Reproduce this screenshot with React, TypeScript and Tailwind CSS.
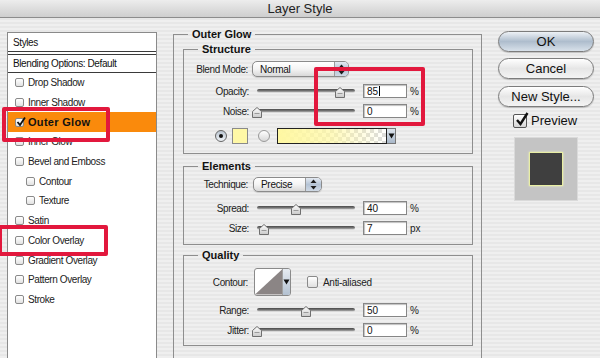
import React from "react";

const styleItems = [
  { name: "Drop Shadow" },
  { name: "Inner Shadow" },
  { name: "Outer Glow", active: true },
  { name: "Inner Glow" },
  { name: "Bevel and Emboss" },
  { name: "Contour", sub: true },
  { name: "Texture", sub: true },
  { name: "Satin" },
  { name: "Color Overlay" },
  { name: "Gradient Overlay" },
  { name: "Pattern Overlay" },
  { name: "Stroke" },
];

function TinyBox({ checked }: { checked?: boolean }) {
  return (
    <div className="relative h-[9px] w-[9px] shrink-0 rounded-[2px] border border-[#8a8a8a] bg-gradient-to-b from-white to-[#e2e2e2]">
      {checked && (
        <svg className="absolute -top-[2px] left-0" width="10" height="10" viewBox="0 0 10 10">
          <path d="M1.5 5 L4 8 L9 0.5" fill="none" stroke="#111" strokeWidth="1.8" />
        </svg>
      )}
    </div>
  );
}

function Arrows() {
  return (
    <svg width="7" height="11" viewBox="0 0 7 11">
      <path d="M3.5 0.5 L6.5 4 H0.5 Z" fill="#1c1c1c" />
      <path d="M3.5 10.5 L6.5 7 H0.5 Z" fill="#1c1c1c" />
    </svg>
  );
}

function DownArrow() {
  return (
    <svg width="7" height="6" viewBox="0 0 7 6">
      <path d="M0.5 0.5 H6.5 L3.5 5.5 Z" fill="#111" />
    </svg>
  );
}

function Popup({ label, w, h, step }: { label: string; w: string; h: string; step: string }) {
  return (
    <div className={`flex ${w} ${h} overflow-hidden rounded-[5px] border border-[#8b8b8b] bg-gradient-to-b from-white via-[#f4f4f4] to-[#d9d9d9] shadow-[0_1px_1px_rgba(0,0,0,0.15)]`}>
      <div className="flex flex-1 items-center pl-[7px] text-[10px] tracking-[-0.3px]">{label}</div>
      <div className={`flex ${step} items-center justify-center border-l border-[#9a9a9a] bg-gradient-to-b from-[#e4eaf2] via-[#b5c4d6] to-[#cfd9e5]`}>
        <Arrows />
      </div>
    </div>
  );
}

function Slider({ value }: { value: number }) {
  return (
    <div className="relative ml-[8px] flex h-[14px] w-[98px] items-center">
      <div className="h-[4px] w-full rounded-full border-b border-[#d8d8d8] bg-gradient-to-b from-[#4a4a4a] via-[#6e6e6e] to-[#a8a8a8]" />
      <svg
        className="absolute top-[3px]"
        style={{ left: `calc(${value}% - 5px)` }}
        width="10"
        height="11"
        viewBox="0 0 10 11"
      >
        <defs>
          <linearGradient id="thumb" x1="0" y1="0" x2="0" y2="1">
            <stop offset="0" stopColor="#ffffff" />
            <stop offset="1" stopColor="#c9c9c9" />
          </linearGradient>
        </defs>
        <path d="M5 0.5 L9.5 4.5 V10.5 H0.5 V4.5 Z" fill="url(#thumb)" stroke="#6f6f6f" />
        <path d="M2.5 6.5 H7.5" stroke="#9a9a9a" />
      </svg>
    </div>
  );
}

function NumField({ value, caret }: { value: string; caret?: boolean }) {
  return (
    <div className="ml-[8px] flex h-[14px] w-[44px] items-center border border-[#868686] bg-white pl-[3px] text-[10px] shadow-[inset_1px_1px_1px_rgba(0,0,0,0.25)]">
      {value}
      {caret && <span className="ml-[1px] h-[10px] w-px bg-black" />}
    </div>
  );
}

function SliderRow({ label, value, unit, caret, mt }: { label: string; value: number; unit: string; caret?: boolean; mt: string }) {
  return (
    <div className={`flex h-[14px] items-center ${mt}`}>
      <div className="w-[65px] text-right text-[10px] tracking-[-0.4px] text-[#222]">{label}</div>
      <Slider value={value} />
      <NumField value={String(value)} caret={caret} />
      <div className="ml-[3px] text-[10px] text-[#222]">{unit}</div>
    </div>
  );
}

function Group({ title, className, legend = "ml-[14px]", children }: { title: string; className: string; legend?: string; children: React.ReactNode }) {
  return (
    <fieldset className={`border border-[#8e8e8e] ${className}`}>
      <legend className={`${legend} px-[4px] text-[11px] leading-[12px] font-bold text-[#111]`}>{title}</legend>
      {children}
    </fieldset>
  );
}

function AquaButton({ label, primary, mt }: { label: string; primary?: boolean; mt: string }) {
  return (
    <button
      className={`${mt} flex h-[21px] w-[96px] items-center justify-center rounded-full border border-[#7c7c7c] text-[13px] text-[#111] shadow-[0_1px_1px_rgba(0,0,0,0.2)] ${
        primary
          ? "bg-gradient-to-b from-[#eef2f6] via-[#aebdcd] to-[#d8e1ea]"
          : "bg-gradient-to-b from-white via-[#e6e6e6] to-[#f4f4f4]"
      }`}
    >
      {label}
    </button>
  );
}

export default function App() {
  return (
    <div className="relative h-[358px] w-[600px] overflow-hidden bg-[repeating-linear-gradient(180deg,#efefef_0px,#efefef_2px,#e7e7e7_2px,#e7e7e7_4px)] font-['Liberation_Sans',Arial,sans-serif] text-[#111]">
      <div className="h-[18px] border-b border-[#8c8c8c] bg-gradient-to-b from-[#ededed] to-[#cecece] text-center text-[13px] leading-[17px] text-[#222]">
        Layer Style
      </div>

      <div className="flex items-start">
        {/* styles list */}
        <div className="ml-[7px] mt-[14px] h-[340px] w-[150px] shrink-0 border border-[#8a8a8a] bg-white">
          <div className="flex h-[19px] items-center border-b border-[#3a3a3a] pl-[5px] text-[10px] tracking-[-0.4px]">Styles</div>
          <div className="h-[2px]" />
          <div className="flex h-[19px] items-center border-y border-[#3a3a3a] pl-[5px] text-[10px] tracking-[-0.4px]">
            Blending Options: Default
          </div>
          {styleItems.map((s) => (
            <div
              key={s.name}
              className={`flex h-[19.7px] items-center ${s.sub ? "pl-[18px]" : "pl-[7px]"} ${s.active ? "bg-[#fa8a0c]" : ""}`}
            >
              <TinyBox checked={s.active} />
              {s.active ? (
                <span className="ml-[4px] text-[11px] font-bold tracking-[0.3px]">{s.name}</span>
              ) : (
                <span className="ml-[4px] text-[10px] tracking-[-0.4px] text-[#222]">{s.name}</span>
              )}
            </div>
          ))}
        </div>

        {/* settings */}
        <Group title="Outer Glow" legend="ml-[5px]" className="ml-[16px] mt-[10px] h-[340px] w-[309px] shrink-0 pl-[9px] pr-[8px]">
          <Group title="Structure" className="mt-[3px] w-[290px] pb-[9px]">
            <div className="mt-[6px] flex h-[16px] items-center">
              <div className="w-[64px] text-right text-[10px] tracking-[-0.4px] text-[#222]">Blend Mode:</div>
              <div className="ml-[4px]">
                <Popup label="Normal" w="w-[97px]" h="h-[16px]" step="w-[14px]" />
              </div>
            </div>
            <SliderRow label="Opacity:" value={85} unit="%" caret mt="mt-[7px]" />
            <SliderRow label="Noise:" value={0} unit="%" mt="mt-[6px]" />
            <div className="mt-[10px] flex h-[16px] items-center pl-[31px]">
              <div className="flex h-[12px] w-[12px] items-center justify-center rounded-full border border-[#666] bg-gradient-to-b from-[#b9c4d0] to-[#eef2f6]">
                <div className="h-[4px] w-[4px] rounded-full bg-[#111]" />
              </div>
              <div className="ml-[5px] h-[16px] w-[16px] border border-[#8a8a8a] bg-[#fff8a6]" />
              <div className="ml-[10px] h-[12px] w-[12px] rounded-full border border-[#999] bg-gradient-to-b from-white to-[#d8d8d8]" />
              <div className="ml-[7px] flex h-[16px]">
                <div className="h-[16px] w-[110px] border border-[#222] bg-[repeating-conic-gradient(#dcdcdc_0_25%,#ffffff_0_50%)] bg-[length:8px_8px]">
                  <div className="h-full w-full bg-gradient-to-r from-[#fff8a2] via-[#fff8a2]/70 to-transparent" />
                </div>
                <div className="flex h-[16px] w-[9px] items-center justify-center border-y border-r border-[#777] bg-gradient-to-b from-[#dde4ec] to-[#a9b8c9]">
                  <DownArrow />
                </div>
              </div>
            </div>
          </Group>

          <Group title="Elements" className="mt-[6px] w-[290px] pb-[9px]">
            <div className="mt-[5px] flex h-[15px] items-center">
              <div className="w-[64px] text-right text-[10px] tracking-[-0.4px] text-[#222]">Technique:</div>
              <div className="ml-[5px]">
                <Popup label="Precise" w="w-[69px]" h="h-[15px]" step="w-[16px]" />
              </div>
            </div>
            <SliderRow label="Spread:" value={40} unit="%" mt="mt-[9px]" />
            <SliderRow label="Size:" value={7} unit="px" mt="mt-[6px]" />
          </Group>

          <Group title="Quality" className="mt-[4px] w-[290px] pb-[8px]">
            <div className="mt-[7px] flex h-[28px] items-center">
              <div className="w-[64px] text-right text-[10px] tracking-[-0.4px] text-[#222]">Contour:</div>
              <div className="ml-[6px] flex h-[28px] w-[37px] overflow-hidden rounded-[3px] border border-[#8a8a8a] bg-white">
                <svg width="28" height="26" viewBox="0 0 28 26">
                  <path d="M0 26 L28 0 V26 Z" fill="#8b8585" />
                </svg>
                <div className="flex flex-1 items-center justify-center border-l border-[#a0a0a0] bg-gradient-to-b from-[#e6ebf1] to-[#b3c1d1]">
                  <DownArrow />
                </div>
              </div>
              <div className="ml-[16px] h-[12px] w-[11px] rounded-[2px] border border-[#8a8a8a] bg-gradient-to-b from-white to-[#e0e0e0]" />
              <div className="ml-[5px] text-[10px] tracking-[-0.3px] text-[#222]">Anti-aliased</div>
            </div>
            <SliderRow label="Range:" value={50} unit="%" mt="mt-[7px]" />
            <SliderRow label="Jitter:" value={0} unit="%" mt="mt-[6px]" />
          </Group>
        </Group>

        {/* buttons */}
        <div className="ml-[16px] mt-[13px] flex w-[96px] shrink-0 flex-col">
          <AquaButton label="OK" primary mt="mt-0" />
          <AquaButton label="Cancel" mt="mt-[6px]" />
          <AquaButton label="New Style..." mt="mt-[7px]" />
          <div className="mt-[7px] flex h-[14px] items-center pl-[15px]">
            <div className="relative h-[14px] w-[14px] rounded-[2px] border border-[#555] bg-gradient-to-b from-white to-[#d6d6d6]">
              <svg className="absolute -top-[3px] left-[1px]" width="14" height="15" viewBox="0 0 14 15">
                <path d="M2 8 L5.5 12 L12.5 1" fill="none" stroke="#111" strokeWidth="2.4" />
              </svg>
            </div>
            <span className="ml-[4px] text-[13px] leading-[14px]">Preview</span>
          </div>
          <div className="ml-[16px] mt-[9px] flex h-[64px] w-[64px] items-center justify-center border border-[#dadada] bg-[#c4c4c4]">
            <div className="h-[34px] w-[34px] border-[1.5px] border-[#e8eea4] bg-[#3f3f3f] shadow-[0_0_2px_#f2f6b8]" />
          </div>
        </div>
      </div>

      {/* red annotation boxes */}
      <div className="pointer-events-none absolute left-[2px] top-[107px] h-[35px] w-[108px] rounded-[2px] border-[4px] border-[#e2183d]" />
      <div className="pointer-events-none absolute left-[-2px] top-[225px] h-[31px] w-[110px] rounded-[2px] border-[4px] border-[#e2183d]" />
      <div className="pointer-events-none absolute left-[314px] top-[67px] h-[59px] w-[111px] rounded-[2px] border-[4px] border-[#e2183d]" />
    </div>
  );
}
